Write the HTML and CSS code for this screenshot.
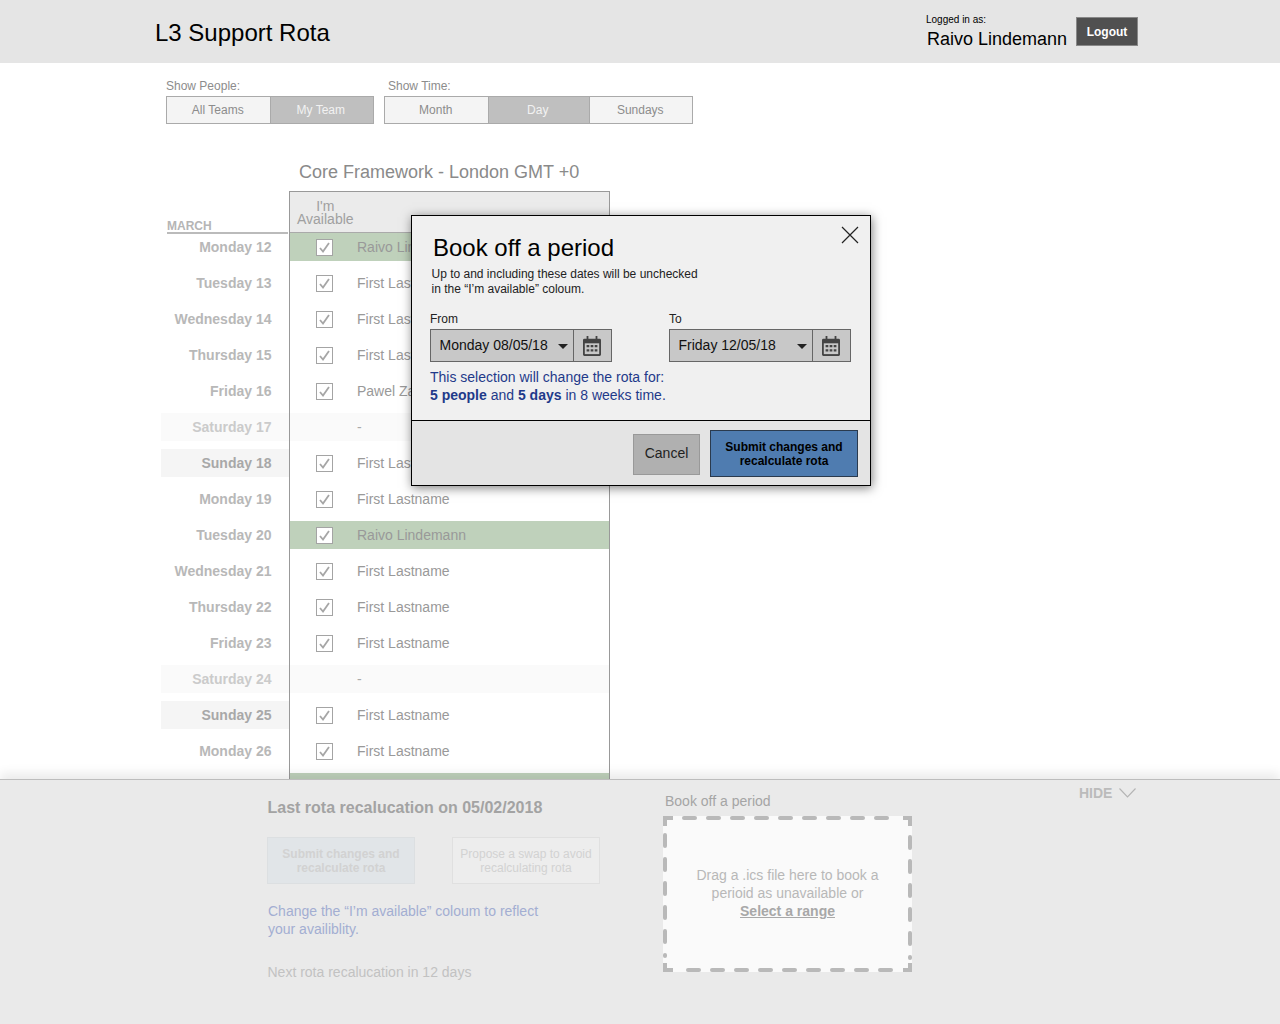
FILE: index.html
```html
<!DOCTYPE html>
<html lang="en">
<head>
  <meta charset="UTF-8" />
  <title>L3 Support Rota</title>
  <link rel="stylesheet" href="styles.css">
</head>
<body>
<svg class="defs" width="0" height="0">
  <symbol id="cal" viewBox="0 0 20 22">
    <path fill="#444" d="M4 0h2v3h8V0h2v3h2.500A1.500 1.500 0 0 1 20 4.500v16a1.500 1.500 0 0 1-1.500 1.500h-17A1.500 1.500 0 0 1 0 20.500v-16A1.500 1.500 0 0 1 1.500 3H4z"/>
    <path fill="#c8c8c8" d="M2 8h16v12H2z"/>
    <path fill="#444" d="M4 10h3v2.500H4zM8.500 10h3v2.500h-3zM13 10h3v2.500h-3zM4 14.500h3V17H4zM8.500 14.500h3V17h-3zM13 14.500h3V17h-3z"/>
  </symbol>
  <symbol id="tick" viewBox="0 0 15 15">
    <path fill="none" stroke="#a6a6a6" stroke-width="1.800" d="M3 8l3 3.500 6-8.500"/>
  </symbol>
</svg>

<div class="page">
  <header class="topbar">
    <h1>L3 Support Rota</h1>
    <div class="user">
      <div class="user-label">Logged in as:</div>
      <div class="user-name">Raivo Lindemann</div>
    </div>
    <button class="logout">Logout</button>
  </header>

  <main class="content">
    <div class="filters">
      <div class="filter">
        <div class="filter-label">Show People:</div>
        <div class="seg">
          <span class="w103">All Teams</span>
          <span class="w103 on">My Team</span>
        </div>
      </div>
      <div class="filter">
        <div class="filter-label">Show Time:</div>
        <div class="seg">
          <span class="w103">Month</span>
          <span class="w101 on">Day</span>
          <span class="w103">Sundays</span>
        </div>
      </div>
    </div>

    <h2 class="team">Core Framework - London GMT +0</h2>

    <div class="rota">
      <div class="days">
        <div class="month">MARCH</div>
        <div class="day">Monday 12</div>
        <div class="day">Tuesday 13</div>
        <div class="day">Wednesday 14</div>
        <div class="day">Thursday 15</div>
        <div class="day">Friday 16</div>
        <div class="day sat">Saturday 17</div>
        <div class="day sun">Sunday 18</div>
        <div class="day">Monday 19</div>
        <div class="day">Tuesday 20</div>
        <div class="day">Wednesday 21</div>
        <div class="day">Thursday 22</div>
        <div class="day">Friday 23</div>
        <div class="day sat">Saturday 24</div>
        <div class="day sun">Sunday 25</div>
        <div class="day">Monday 26</div>
      </div>
      <div class="people">
        <div class="people-head"><span class="avail">I'm<br>Available</span></div>
        <div class="person me"><span class="check"><svg><use href="#tick"/></svg></span>Raivo Lindemann</div>
        <div class="person"><span class="check"><svg><use href="#tick"/></svg></span>First Lastname</div>
        <div class="person"><span class="check"><svg><use href="#tick"/></svg></span>First Lastname</div>
        <div class="person"><span class="check"><svg><use href="#tick"/></svg></span>First Lastname</div>
        <div class="person"><span class="check"><svg><use href="#tick"/></svg></span>Pawel Zawadzki</div>
        <div class="person off"><span class="no-check"></span>-</div>
        <div class="person"><span class="check"><svg><use href="#tick"/></svg></span>First Lastname</div>
        <div class="person"><span class="check"><svg><use href="#tick"/></svg></span>First Lastname</div>
        <div class="person me"><span class="check"><svg><use href="#tick"/></svg></span>Raivo Lindemann</div>
        <div class="person"><span class="check"><svg><use href="#tick"/></svg></span>First Lastname</div>
        <div class="person"><span class="check"><svg><use href="#tick"/></svg></span>First Lastname</div>
        <div class="person"><span class="check"><svg><use href="#tick"/></svg></span>First Lastname</div>
        <div class="person off"><span class="no-check"></span>-</div>
        <div class="person"><span class="check"><svg><use href="#tick"/></svg></span>First Lastname</div>
        <div class="person"><span class="check"><svg><use href="#tick"/></svg></span>First Lastname</div>
        <div class="person me"></div>
      </div>
    </div>
  </main>

  <footer class="panel">
    <div class="panel-left">
      <h3>Last rota recalucation on 05/02/2018</h3>
      <div class="panel-btns">
        <div class="pbtn primary">Submit changes and<br>recalculate rota</div>
        <div class="pbtn">Propose a swap to avoid<br>recalculating rota</div>
      </div>
      <p class="hint">Change the “I’m available” coloum to reflect<br>your availiblity.</p>
      <p class="next">Next rota recalucation in 12 days</p>
    </div>
    <div class="panel-right">
      <div class="drop-label">Book off a period</div>
      <div class="drop">
        <svg class="drop-border" width="249" height="156" viewBox="0 0 249 156">
          <g fill="none" stroke="#b9b9b9" stroke-width="4" stroke-linecap="round">
            <path stroke-dasharray="11 13" d="M21 2H226"/>
            <path stroke-dasharray="11 13" d="M25 154H230"/>
            <path stroke-dasharray="11 13" d="M2 19V140"/>
            <path stroke-dasharray="11 13" d="M247 21V142"/>
          </g>
          <g fill="none" stroke="#b9b9b9" stroke-width="4">
            <path d="M2 10V2H10"/>
            <path d="M240 2H247V10"/>
            <path d="M2 147V154H10"/>
            <path d="M240 154H247V147"/>
          </g>
        </svg>
        <div class="drop-text">Drag a .ics file here to book a<br>perioid as unavailable or<br><a class="drop-link">Select a range</a></div>
      </div>
    </div>
    <div class="hide">HIDE
      <svg width="17" height="10" viewBox="0 0 17 10"><path fill="none" stroke="#b4b4b4" stroke-width="1.100" d="M.5.500l8 8.500 8-8.500"/></svg>
    </div>
  </footer>

  <div class="modal">
    <div class="modal-body">
      <svg class="close" width="18" height="18" viewBox="0 0 18 18"><path fill="none" stroke="#222" stroke-width="1.200" d="M1 1l16 16M17 1L1 17"/></svg>
      <h2>Book off a period</h2>
      <p class="modal-desc">Up to and including these dates will be unchecked<br>in the “I’m available” coloum.</p>
      <div class="dates">
        <div class="date">
          <div class="date-label">From</div>
          <div class="picker">
            <div class="picker-val">Monday 08/05/18<i class="caret"></i></div>
            <div class="picker-btn"><svg width="18" height="20"><use href="#cal"/></svg></div>
          </div>
        </div>
        <div class="date">
          <div class="date-label">To</div>
          <div class="picker">
            <div class="picker-val">Friday 12/05/18<i class="caret"></i></div>
            <div class="picker-btn"><svg width="18" height="20"><use href="#cal"/></svg></div>
          </div>
        </div>
      </div>
      <p class="modal-note">This selection will change the rota for:<br><b>5 people</b> and <b>5 days</b> in 8 weeks time.</p>
    </div>
    <div class="modal-foot">
      <button class="cancel">Cancel</button>
      <button class="submit">Submit changes and<br>recalculate rota</button>
    </div>
  </div>
</div>
</body>
</html>
```

FILE: styles.css
```css
body {
  margin: 0;
  font-family: "Liberation Sans", Arial, sans-serif;
  background: #fff;
}
.defs {
  position: absolute;
}
.page {
  position: relative;
  display: flex;
  flex-direction: column;
  height: 1024px;
  overflow: hidden;
}

/* top bar */
.topbar {
  display: flex;
  align-items: flex-start;
  flex: none;
  height: 63px;
  background: #e5e5e5;
  padding-left: 155px;
  box-sizing: border-box;
}
.topbar h1 {
  margin: 18px 0 0;
  width: 771px;
  font-size: 24px;
  line-height: 30px;
  font-weight: 400;
  color: #000;
}
.user {
  width: 150px;
  padding-top: 14px;
  color: #000;
}
.user-label {
  font-size: 10px;
  line-height: 12px;
}
.user-name {
  margin-top: 2px;
  padding-left: 1px;
  font-size: 18px;
  line-height: 22px;
}
.logout {
  margin-top: 17px;
  width: 62px;
  height: 29px;
  padding: 0;
  background: #505050;
  border: 1px solid #888;
  color: #fff;
  font: bold 12px "Liberation Sans", Arial, sans-serif;
}

/* main */
.content {
  flex: 1;
  min-height: 0;
  overflow: hidden;
}
.filters {
  display: flex;
  gap: 10px;
  padding: 16px 0 0 166px;
}
.filter-label {
  font-size: 12px;
  line-height: 14px;
  color: #8c8c8c;
  margin-bottom: 3px;
}
.filter:last-child .filter-label {
  margin-left: 4px;
}
.seg {
  display: flex;
  height: 28px;
  box-sizing: border-box;
  border: 1px solid #aaa;
  background: #f4f4f4;
  font-size: 12px;
  line-height: 26px;
  color: #8c8c8c;
  text-align: center;
}
.seg span {
  box-sizing: border-box;
  padding-right: 1.500px;
}
.seg span + span {
  border-left: 1px solid #aaa;
}
.seg .on {
  background: #bfbfbf;
  color: #f2f2f2;
  padding-right: 2.500px;
}
.w103 { width: 103px; }
.w101 { width: 101px; }

.team {
  margin: 37px 0 8px 299px;
  font-size: 18px;
  line-height: 22px;
  font-weight: 400;
  color: #8a8a8a;
}
.rota {
  display: flex;
  margin-left: 161px;
}
.days {
  width: 128px;
}
.month {
  height: 43px;
  box-sizing: border-box;
  margin: 0 1px -1px 6px;
  padding-top: 29px;
  border-bottom: 2px solid #bbb;
  font-size: 12px;
  line-height: 13px;
  font-weight: 700;
  color: #b5b5b5;
}
.day {
  height: 28px;
  margin-bottom: 8px;
  padding-right: 17.500px;
  text-align: right;
  font-size: 14px;
  line-height: 28px;
  font-weight: 700;
  color: #b8b8b8;
}
.sat {
  background: #fafafa;
  color: #cbcbcb;
}
.sun {
  background: #f5f5f5;
  color: #a8a8a8;
}
.people {
  width: 321px;
  box-sizing: border-box;
  border: 1px solid #999;
  border-bottom: 0;
}
.people-head {
  height: 41px;
  box-sizing: border-box;
  padding: 8px 0 0 7px;
  background: #ebebeb;
  border-bottom: 1px solid #aaa;
  font-size: 14px;
  line-height: 13px;
  color: #a0a0a0;
}
.avail {
  display: inline-block;
  text-align: center;
}
.person {
  display: flex;
  align-items: center;
  height: 28px;
  margin-bottom: 8px;
  font-size: 14px;
  color: #999;
}
.me {
  background: #bfd1bb;
}
.off {
  background: #fafafa;
  color: #aaa;
}
.check, .no-check {
  flex: none;
  width: 17px;
  height: 17px;
  box-sizing: border-box;
  margin: 0 24px 0 26px;
}
.check {
  background: #fff;
  border: 1px solid #a4a4a4;
}
.check svg {
  display: block;
  width: 15px;
  height: 15px;
}

/* bottom panel */
.panel {
  position: relative;
  flex: none;
  display: flex;
  height: 245px;
  box-sizing: border-box;
  padding-left: 267px;
  background: #eaeaea;
  border-top: 1px solid #bdbdbd;
  box-shadow: 0 -6px 10px rgba(0, 0, 0, 0.08);
}
.panel-left {
  width: 396px;
  padding-top: 18px;
}
.panel-left h3 {
  margin: 0 0 0 0.500px;
  font-size: 16px;
  line-height: 20px;
  color: #a3a3a3;
}
.panel-btns {
  display: flex;
  gap: 37px;
  margin-top: 19px;
}
.pbtn {
  width: 148px;
  height: 47px;
  box-sizing: border-box;
  border: 1px solid #e0e0e0;
  background: #ededed;
  padding-top: 9px;
  text-align: center;
  font-size: 12px;
  line-height: 14px;
  color: #d2d2d2;
}
.primary {
  background: #e1e5e8;
  border-color: #dcdfe1;
  font-weight: 700;
}
.hint {
  margin: 18px 0 0 1px;
  font-size: 14px;
  line-height: 18px;
  color: #a3aed2;
}
.next {
  margin: 25px 0 0 0.500px;
  font-size: 14px;
  line-height: 18px;
  color: #c2c2c2;
}
.panel-right {
  width: 249px;
  padding-top: 13px;
}
.drop-label {
  margin: 0 0 7px 2px;
  font-size: 14px;
  line-height: 16px;
  color: #a5a5a5;
}
.drop {
  position: relative;
  width: 249px;
  height: 156px;
  background: #fafafa;
}
.drop-border {
  position: absolute;
  left: 0;
  top: 0;
}
.drop-text {
  padding-top: 50px;
  text-align: center;
  font-size: 14px;
  line-height: 18px;
  color: #b8b8b8;
}
.drop-link {
  font-weight: 700;
  color: #a8a8a8;
  text-decoration: underline;
}
.hide {
  display: flex;
  align-items: center;
  gap: 7px;
  height: 14px;
  margin: 6px 0 0 167px;
  font-size: 14px;
  font-weight: 700;
  color: #bbb;
}

/* dialog */
.modal {
  position: absolute;
  left: 411px;
  top: 215px;
  width: 460px;
  height: 271px;
  box-sizing: border-box;
  border: 1px solid #000;
  background: #f0f0f0;
  box-shadow: 1px 2px 10px rgba(0, 0, 0, 0.5);
  display: flex;
  flex-direction: column;
}
.modal-body {
  position: relative;
  height: 205px;
  box-sizing: border-box;
  padding: 17px 18px 0;
  border-bottom: 1px solid #000;
}
.close {
  position: absolute;
  right: 11px;
  top: 10px;
}
.modal h2 {
  margin: 0 0 0 3px;
  font-size: 24px;
  line-height: 30px;
  font-weight: 400;
  color: #000;
}
.modal-desc {
  margin: 4px 0 0 1.500px;
  font-size: 12px;
  line-height: 15px;
  color: #222;
}
.dates {
  display: flex;
  gap: 57px;
  margin-top: 15px;
}
.date {
  width: 182px;
}
.date-label {
  font-size: 12px;
  line-height: 14px;
  margin-bottom: 3px;
  color: #222;
}
.picker {
  display: flex;
  height: 33px;
  box-sizing: border-box;
  border: 1px solid #666;
  background: #c8c8c8;
}
.picker-val {
  position: relative;
  flex: 1;
  padding-left: 8.500px;
  font-size: 14px;
  line-height: 30px;
  color: #111;
}
.caret {
  position: absolute;
  right: 5px;
  top: 14px;
  border: 5px solid transparent;
  border-top-color: #222;
  border-bottom: 0;
}
.picker-btn {
  width: 38px;
  box-sizing: border-box;
  border-left: 1px solid #666;
  padding: 6px 0 0 9px;
}
.picker-btn svg {
  display: block;
}
.modal-note {
  margin: 6px 0 0;
  font-size: 14px;
  line-height: 18px;
  color: #1f3a8a;
}
.modal-foot {
  flex: 1;
  display: flex;
  justify-content: flex-end;
  align-items: flex-start;
  gap: 10px;
  padding: 9px 12px 0 0;
  background: #e4e4e4;
}
.cancel {
  width: 67px;
  height: 41px;
  margin-top: 4px;
  padding: 0 0 4px;
  background: #b0b0b0;
  border: 1px solid #999;
  font: 14px "Liberation Sans", Arial, sans-serif;
  color: #222;
}
.submit {
  width: 148px;
  height: 47px;
  padding: 0;
  background: #4f7cb0;
  border: 1px solid #2a3a4e;
  font: bold 12px/14px "Liberation Sans", Arial, sans-serif;
  color: #000;
}
```
